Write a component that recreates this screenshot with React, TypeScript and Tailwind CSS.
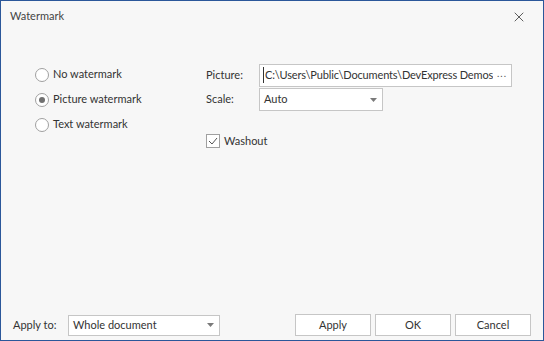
import { X } from 'lucide-react';

function Radio({ label, checked }: { label: string; checked?: boolean }) {
    return (
        <div className="flex items-center h-[25px]">
            <div className="w-[14px] h-[14px] rounded-full border border-[#a0a0a0] bg-white flex items-center justify-center">
                {checked && <div className="w-[6px] h-[6px] rounded-full bg-[#707070]" />}
            </div>
            <span className="ml-[4px]">{label}</span>
        </div>
    );
}

function Caret() {
    return (
        <svg width="7" height="4" viewBox="0 0 7 4" className="shrink-0">
            <path d="M0 0h7L3.5 4z" fill="#7a7a7a" />
        </svg>
    );
}

export default function App() {
    return (
        <div
            className="w-[544px] h-[341px] border border-[#2b579a] bg-[#f7f7f7] flex flex-col text-[11px] text-[#333]"
            style={{ fontFamily: 'Lato, "Noto Sans", sans-serif' }}
        >
            {/* Title bar */}
            <div className="h-[31px] flex items-center justify-between pl-[9px] pr-[16px]">
                <span className="text-[#444]">Watermark</span>
                <X size={16} strokeWidth={1.3} className="text-[#444]" />
            </div>

            {/* Body */}
            <div className="flex-1 flex pt-[30px] pl-[34px]">
                <div className="w-[171px] flex flex-col">
                    <Radio label="No watermark" />
                    <Radio label="Picture watermark" checked />
                    <Radio label="Text watermark" />
                </div>

                <div className="flex flex-col">
                    <div className="flex items-center h-[24px] mt-[1px]">
                        <span className="w-[53px]">Picture:</span>
                        <div className="w-[253px] h-[23px] border border-[#c6c6c6] bg-white flex items-center pl-[3px] pr-[4px]">
                            <span className="flex-1 overflow-hidden whitespace-nowrap border-l border-[#333] pl-[1px] tracking-[-0.15px]">
                                C:\Users\Public\Documents\DevExpress Demos 2
                            </span>
                            <span className="ml-[4px] text-[10px] tracking-[1px] text-[#555] -mt-[4px]">...</span>
                        </div>
                    </div>
                    <div className="flex items-center h-[23px] mt-[1px]">
                        <span className="w-[53px]">Scale:</span>
                        <div className="w-[124px] h-[23px] border border-[#c6c6c6] bg-white flex items-center justify-between pl-[4px] pr-[5px]">
                            <span>Auto</span>
                            <Caret />
                        </div>
                    </div>
                    <div className="flex items-center mt-[22px]">
                        <div className="w-[14px] h-[14px] border border-[#a0a0a0] bg-white flex items-center justify-center">
                            <svg width="10" height="8" viewBox="0 0 10 8">
                                <path d="M1 4l3 3 5-6" fill="none" stroke="#555" strokeWidth="1" />
                            </svg>
                        </div>
                        <span className="ml-[4px]">Washout</span>
                    </div>
                </div>
            </div>

            {/* Footer */}
            <div className="flex items-center pl-[12px] pr-[12px] pb-[4px] h-[26px]">
                <span className="w-[55px]">Apply to:</span>
                <div className="w-[152px] h-[21px] border border-[#c6c6c6] bg-white flex items-center justify-between pl-[4px] pr-[5px]">
                    <span>Whole document</span>
                    <Caret />
                </div>
                <div className="flex-1" />
                <div className="flex gap-[4px]">
                    {['Apply', 'OK', 'Cancel'].map(t => (
                        <button key={t} className="w-[76px] h-[22px] border border-[#c6c6c6] bg-white flex items-center justify-center">
                            {t}
                        </button>
                    ))}
                </div>
            </div>
        </div>
    );
}
